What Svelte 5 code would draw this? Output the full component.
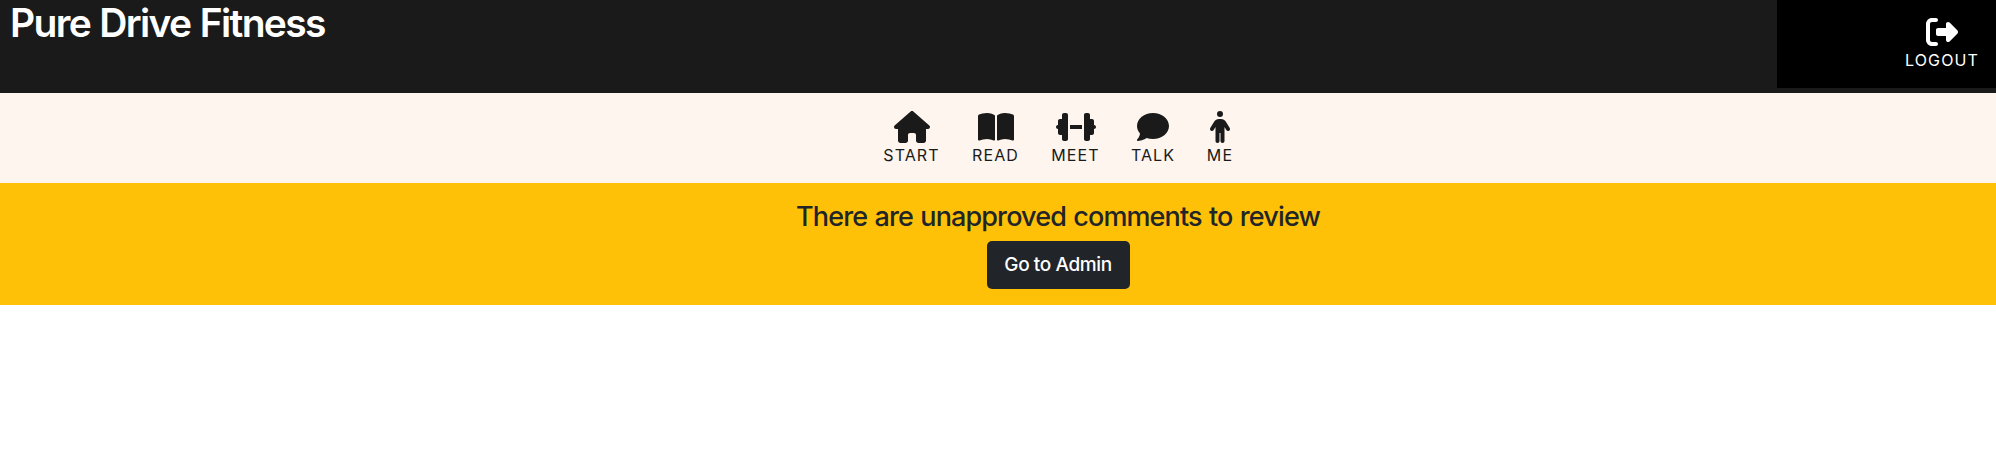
<script>
  const items = [
    { label: 'START', w: 576, width: 56, d: 'M575.8 255.5c0 18-15 32.1-32 32.1h-32l.7 160.2c0 2.7-.2 5.4-.5 8.1V472c0 22.1-17.9 40-40 40H456c-1.1 0-2.2 0-3.3-.1c-1.4 .1-2.8 .1-4.2 .1H416 392c-22.1 0-40-17.9-40-40V448 384c0-17.7-14.3-32-32-32H256c-17.7 0-32 14.3-32 32v64 24c0 22.1-17.9 40-40 40H160 128.1c-1.5 0-3-.1-4.5-.2c-1.2 .1-2.4 .2-3.6 .2H104c-22.1 0-40-17.9-40-40V360c0-.9 0-1.9 .1-2.8V287.6H32c-18 0-32-14-32-32.1c0-9 3-17 10-24L266.4 8c7-7 15-8 22-8s15 2 21 7L564.8 231.5c8 7 12 15 11 24z' },
    { label: 'READ', w: 576, width: 48, d: 'M249.6 471.5c10.8 3.8 22.4-4.1 22.4-15.5V78.6c0-4.2-1.6-8.4-5-11C247.4 52 202.4 32 144 32C93.5 32 46.3 45.3 18.1 56.1C6.8 60.5 0 71.7 0 83.8V454.1c0 11.9 12.8 20.2 24.1 16.5C55.6 460.1 105.5 448 144 448c33.9 0 79 14 105.6 23.5zm76.8 0C353 462 398.1 448 432 448c38.5 0 88.4 12.1 119.9 22.6c11.3 3.8 24.1-4.6 24.1-16.5V83.8c0-12.1-6.8-23.3-18.1-27.6C529.7 45.3 482.5 32 432 32c-58.4 0-103.4 20-123 35.6c-3.3 2.6-5 6.8-5 11V456c0 11.4 11.7 19.3 22.4 15.5z' },
    { label: 'MEET', w: 640, width: 48, d: 'M96 64c0-17.7 14.3-32 32-32h32c17.7 0 32 14.3 32 32V224v64V448c0 17.7-14.3 32-32 32H128c-17.7 0-32-14.3-32-32V384H64c-17.7 0-32-14.3-32-32V288c-17.7 0-32-14.3-32-32s14.3-32 32-32V160c0-17.7 14.3-32 32-32H96V64zm448 0v64h32c17.7 0 32 14.3 32 32v64c17.7 0 32 14.3 32 32s-14.3 32-32 32v64c0 17.7-14.3 32-32 32H544v64c0 17.7-14.3 32-32 32H480c-17.7 0-32-14.3-32-32V288 224 64c0-17.7 14.3-32 32-32h32c17.7 0 32 14.3 32 32zM416 224v64H224V224H416z' },
    { label: 'TALK', w: 512, width: 43, d: 'M512 240c0 114.9-114.6 208-256 208c-37.1 0-72.3-6.4-104.1-17.9c-11.9 8.7-31.3 20.6-54.3 30.6C73.6 471.1 44.7 480 16 480c-6.5 0-12.3-3.9-14.8-9.9c-2.5-6-1.1-12.8 3.4-17.4l.3-.3c.3-.3 .7-.7 1.3-1.4c1.1-1.2 2.8-3.1 4.9-5.7c4.1-5 9.6-12.4 15.2-21.6c10-16.6 19.5-38.4 21.4-62.9C17.7 326.8 0 285.1 0 240C0 125.1 114.6 32 256 32s256 93.1 256 208z' },
    { label: 'ME', w: 320, width: 27, d: 'M112 48a48 48 0 1 1 96 0A48 48 0 1 1 112 48zm40 304V480c0 17.7-14.3 32-32 32s-32-14.3-32-32V256.9L59.4 304.5c-9.1 15.1-28.8 20-43.9 10.9s-20-28.8-10.9-43.9l58.3-97c17.4-28.9 48.6-46.6 82.3-46.6h29.7c33.7 0 64.9 17.7 82.3 46.6l58.3 97c9.1 15.1 4.2 34.8-10.9 43.9s-34.8 4.2-43.9-10.9L232 256.9V480c0 17.7-14.3 32-32 32s-32-14.3-32-32V352H152z' }
  ];
  const logout = 'M377.9 105.9L500.7 228.7c7.2 7.2 11.3 17.1 11.3 27.3s-4.1 20.1-11.3 27.3L377.9 406.1c-6.4 6.4-15 9.9-24 9.9c-18.7 0-33.9-15.2-33.9-33.9l0-62.1-128 0c-17.7 0-32-14.3-32-32l0-64c0-17.7 14.3-32 32-32l128 0 0-62.1c0-18.7 15.2-33.9 33.9-33.9c9 0 17.6 3.6 24 9.9zM160 96L96 96c-17.7 0-32 14.3-32 32l0 256c0 17.7 14.3 32 32 32l64 0c17.7 0 32 14.3 32 32s-14.3 32-32 32l-64 0c-53 0-96-43-96-96L0 128C0 75 43 32 96 32l64 0c17.7 0 32 14.3 32 32s-14.3 32-32 32z';
</script>

<header>
  <h1>Pure Drive Fitness</h1>
  <div class="account">
    <a class="item logout" href="#logout">
      <svg viewBox="0 0 512 512" width="32" height="32"><path d={logout} /></svg>
      <span>LOGOUT</span>
    </a>
  </div>
</header>
<nav>
  {#each items as item}
    <a class="item" href="#{item.label.toLowerCase()}" style:width="{item.width}px">
      <svg viewBox="0 0 {item.w} 512" width={item.w / 16} height="32"><path d={item.d} /></svg>
      <span>{item.label}</span>
    </a>
  {/each}
</nav>
<section>
  <h2>There are unapproved comments to review</h2>
  <button>Go to Admin</button>
</section>

<style>
  :global(body) {
    background: #fff;
    font-family: Inter, sans-serif;
    color: #212529;
  }
  header {
    height: 93px;
    background: #1a1a1a;
    display: flex;
    justify-content: space-between;
    align-items: flex-start;
  }
  h1 {
    margin: 0;
    padding-left: 10px;
    color: #fff;
    font-size: 39px;
    line-height: 46px;
    font-weight: 600;
    letter-spacing: -1.65px;
    word-spacing: 1px;
  }
  .account {
    box-sizing: border-box;
    width: 219px;
    height: 88px;
    padding: 16px 16px 0 0;
    background: #000;
    display: flex;
    justify-content: flex-end;
  }
  .item {
    display: flex;
    flex-direction: column;
    align-items: center;
    color: #1a1a1a;
    text-decoration: none;
    font-size: 16px;
    line-height: 24px;
    letter-spacing: 1.1px;
  }
  .item svg {
    fill: currentColor;
    flex: none;
  }
  .logout {
    color: #fff;
    width: 76px;
    height: 60px;
    letter-spacing: 1.15px;
  }
  nav {
    box-sizing: border-box;
    height: 90px;
    padding: 18px 0 0 121px;
    background: #fdf5ee;
    display: flex;
    justify-content: center;
    gap: 32px;
  }
  section {
    box-sizing: border-box;
    height: 122px;
    padding: 17px 0 0 120px;
    background: #ffc107;
    display: flex;
    flex-direction: column;
    align-items: center;
  }
  h2 {
    margin: 0 0 7px;
    font-size: 27px;
    line-height: 34px;
    font-weight: 500;
    letter-spacing: -0.88px;
    word-spacing: 1px;
  }
  button {
    width: 143px;
    height: 48px;
    padding: 0;
    border: 0;
    border-radius: 5px;
    background: #212529;
    color: #fff;
    font: 500 19px/48px Inter, sans-serif;
    letter-spacing: -0.4px;
  }
</style>
